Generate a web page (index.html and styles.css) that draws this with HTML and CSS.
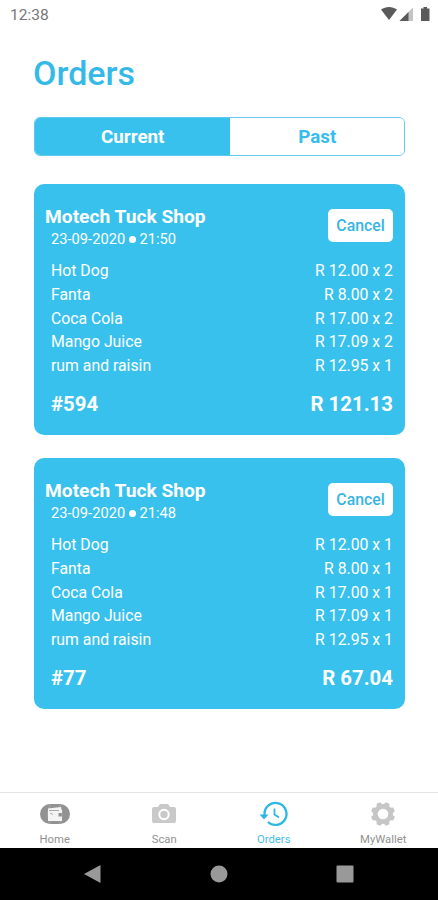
FILE: index.html
```
<!DOCTYPE html>
<html lang="en">
<head>
    <meta charset="UTF-8">
    <meta name="viewport" content="width=device-width, initial-scale=1.0">
    <title>Orders</title>
    <link rel="stylesheet" href="styles.css">
</head>
<body>
    <div class="status-bar">
        <span class="time">12:38</span>
        <svg class="status-icons" width="50" height="16" viewBox="0 0 50 16">
            <path d="M0 3.500C5 0 11 0 16 3.500L8 14z" fill="#5a5a5a"/>
            <path d="M18.500 15L32 1.500V15z" fill="#c4c4c4"/>
            <path d="M18.500 15L27.500 6V15z" fill="#5a5a5a"/>
            <path d="M42.500 1h3.500v1.500h2.500V15h-8.500V2.500H42.500z" fill="#5a5a5a"/>
        </svg>
    </div>

    <main class="content">
        <h1>Orders</h1>

        <div class="tabs">
            <button class="tab active">Current</button>
            <button class="tab">Past</button>
        </div>

        <!-- Current orders -->
        <section class="order">
            <header class="order-header">
                <div>
                    <h2>Motech Tuck Shop</h2>
                    <p class="date">23-09-2020 <i class="dot"></i> 21:50</p>
                </div>
                <button class="cancel">Cancel</button>
            </header>
            <ul class="items">
                <li><span>Hot Dog</span><span>R 12.00 x 2</span></li>
                <li><span>Fanta</span><span>R 8.00 x 2</span></li>
                <li><span>Coca Cola</span><span>R 17.00 x 2</span></li>
                <li><span>Mango Juice</span><span>R 17.09 x 2</span></li>
                <li><span>rum and raisin</span><span>R 12.95 x 1</span></li>
            </ul>
            <footer class="total"><span>#594</span><span>R 121.13</span></footer>
        </section>

        <section class="order">
            <header class="order-header">
                <div>
                    <h2>Motech Tuck Shop</h2>
                    <p class="date">23-09-2020 <i class="dot"></i> 21:48</p>
                </div>
                <button class="cancel">Cancel</button>
            </header>
            <ul class="items">
                <li><span>Hot Dog</span><span>R 12.00 x 1</span></li>
                <li><span>Fanta</span><span>R 8.00 x 1</span></li>
                <li><span>Coca Cola</span><span>R 17.00 x 1</span></li>
                <li><span>Mango Juice</span><span>R 17.09 x 1</span></li>
                <li><span>rum and raisin</span><span>R 12.95 x 1</span></li>
            </ul>
            <footer class="total"><span>#77</span><span>R 67.04</span></footer>
        </section>
    </main>

    <nav class="tab-bar">
        <a class="nav-item">
            <svg width="30" height="28" viewBox="0 0 30 28">
                <rect x="0" y="4" width="30" height="20" rx="10" fill="#929292"/>
                <path d="M10.500 4.500Q5 14 10.500 23.500M19.500 4.500Q25 14 19.500 23.500" fill="none" stroke="#a9a9a9"/>
                <path d="M8 8.500L21 7v2.500h1V13h-3.500v3.500H22V21H8z" fill="#f4f4f4"/>
                <path d="M9 10.500h10M10 13l3 1.500" stroke="#aaa" fill="none"/>
            </svg>
            <span>Home</span>
        </a>
        <a class="nav-item">
            <svg width="30" height="28" viewBox="0 0 30 28">
                <path d="M5 7h4l2-3h8l2 3h4q2 0 2 2v12q0 2-2 2H5q-2 0-2-2V9q0-2 2-2z" fill="#c9c9c9"/>
                <circle cx="15" cy="14.500" r="4.700" fill="#c9c9c9" stroke="#fff" stroke-width="2"/>
            </svg>
            <span>Scan</span>
        </a>
        <a class="nav-item selected">
            <svg width="30" height="28" viewBox="0 0 30 28">
                <path d="M5.500 15V13.500A11 11 0 1 1 9 22" fill="none" stroke="#2db7e4" stroke-width="2.300"/>
                <path d="M.5 14.500h9L5 19.500z" fill="#2db7e4"/>
                <path d="M15.500 8.500v6l4.500 3" fill="none" stroke="#2db7e4" stroke-width="1.800"/>
            </svg>
            <span>Orders</span>
        </a>
        <a class="nav-item">
            <svg width="30" height="28" viewBox="0 0 30 28">
                <g fill="#c6c6c6">
                    <path id="tooth" d="M12 5l1-3h4l1 3v18l-1 3h-4l-1-3z" transform="rotate(22.500 15 14)"/>
                    <use href="#tooth" transform="rotate(45 15 14)"/>
                    <use href="#tooth" transform="rotate(90 15 14)"/>
                    <use href="#tooth" transform="rotate(135 15 14)"/>
                    <circle cx="15" cy="14" r="10"/>
                </g>
                <circle cx="15" cy="14" r="5.300" fill="#fff"/>
            </svg>
            <span>MyWallet</span>
        </a>
    </nav>

    <div class="system-bar">
        <svg width="18" height="20" viewBox="0 0 18 20"><path d="M0 10L16.500 1v18z" fill="#999"/></svg>
        <svg width="18" height="20" viewBox="0 0 18 20"><circle cx="9" cy="10" r="8.500" fill="#999"/></svg>
        <svg width="18" height="20" viewBox="0 0 18 20"><rect x=".5" y="1.500" width="17" height="17" rx="1" fill="#999"/></svg>
    </div>
</body>
</html>
```
FILE: styles.css
```
* {
    box-sizing: border-box;
}
body {
    margin: 0;
    height: 900px;
    display: flex;
    flex-direction: column;
    overflow: hidden;
    background: #fff;
    font-family: Roboto, sans-serif;
}
h1, h2, p, ul {
    margin: 0;
    padding: 0;
}
button {
    font-family: inherit;
    border: none;
    padding: 0;
}
.status-bar {
    height: 30px;
    padding: 6px 7px 0 10px;
    display: flex;
    justify-content: space-between;
}
.time {
    font-size: 15.5px;
    line-height: 18px;
    color: #777;
}
.content {
    flex: 1;
    padding: 21px 33px 0 34px;
}
h1 {
    margin-left: -1px;
    font-size: 34px;
    font-weight: 500;
    line-height: 44px;
    color: #34b9e8;
}
.tabs {
    display: flex;
    height: 39px;
    margin: 22px 0 28px;
    border: 1px solid #62caef;
    border-radius: 6px;
    overflow: hidden;
}
.tab {
    flex: 174;
    background: #fff;
    color: #37bdec;
    font-size: 18.8px;
    font-weight: 700;
}
.tab.active {
    flex: 196;
    background: #39c1ee;
    color: #fff;
}
.order {
    height: 251px;
    margin-bottom: 23px;
    padding: 21px 12px 0 11px;
    border-radius: 10px;
    background: #39c1ee;
    color: #fff;
}
.order-header {
    display: flex;
    justify-content: space-between;
}
h2 {
    font-size: 19.2px;
    font-weight: 700;
    line-height: 24px;
}
.date {
    padding-left: 6px;
    font-size: 14.7px;
    line-height: 21px;
}
.dot {
    display: inline-block;
    width: 7px;
    height: 7px;
    margin-bottom: 1px;
    border-radius: 50%;
    background: #fff;
}
.cancel {
    width: 65px;
    height: 33px;
    margin-top: 4px;
    border-radius: 5px;
    background: #fff;
    color: #37b5e2;
    font-size: 15.8px;
    font-weight: 500;
}
.items {
    margin-top: 9px;
    padding-left: 6px;
    list-style: none;
    font-size: 15.8px;
    line-height: 23.75px;
}
.items li, .total {
    display: flex;
    justify-content: space-between;
}
.total {
    margin-top: 12px;
    padding-left: 6px;
    font-size: 20.4px;
    font-weight: 700;
    line-height: 28px;
}
.tab-bar {
    display: grid;
    grid-template-columns: repeat(4, 1fr);
    height: 56px;
    border-top: 1px solid #e4e4e4;
}
.nav-item {
    display: flex;
    flex-direction: column;
    align-items: center;
    padding-top: 7px;
    font-size: 11.3px;
    line-height: 12px;
    color: #919191;
}
.nav-item span {
    margin-top: 6px;
}
.nav-item.selected {
    color: #45bde6;
}
.system-bar {
    display: flex;
    justify-content: space-between;
    align-items: center;
    height: 52px;
    padding: 0 84px;
    background: #000;
}
```
